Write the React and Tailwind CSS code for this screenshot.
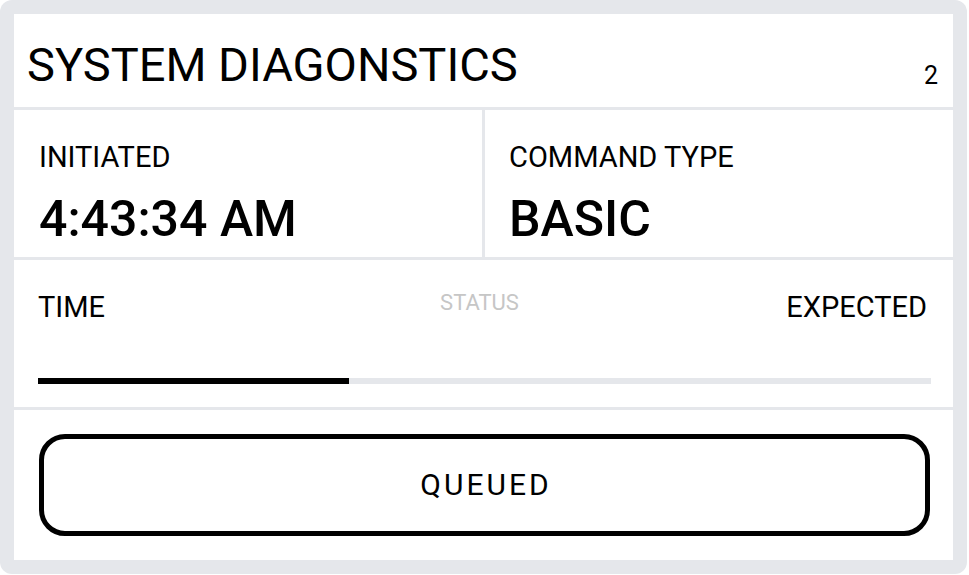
import React from "react";

const progress = 34.8;

function Label({ children, className = "" }) {
  return (
    <div className={`text-[29px] leading-none font-normal text-black ${className}`}>
      {children}
    </div>
  );
}

export default function App() {
  return (
    <div
      className="w-[967px] h-[574px] p-[14px] rounded-[12px] bg-[#e5e7eb] text-black"
      style={{ fontFamily: "Roboto, 'Liberation Sans', sans-serif" }}
    >
      <div className="flex flex-col gap-[3px]">
        {/* Header */}
        <div className="bg-white h-[93px] pl-[13px] pr-[15px] pt-[27px] flex items-start justify-between">
          <h1 className="text-[47px] leading-none font-normal">SYSTEM DIAGONSTICS</h1>
          <span className="text-[25px] leading-none mt-[22px]">2</span>
        </div>

        {/* Initiated / command type */}
        <div className="grid grid-cols-2 gap-[3px] h-[147px]">
          <div className="bg-white pl-[25px] pt-[33px]">
            <Label>INITIATED</Label>
            <div className="mt-[22px] text-[50px] leading-none font-medium">4:43:34 AM</div>
          </div>
          <div className="bg-white pl-[24px] pt-[33px]">
            <Label>COMMAND TYPE</Label>
            <div className="mt-[22px] text-[50px] leading-none font-medium">BASIC</div>
          </div>
        </div>

        {/* Timeline */}
        <div className="bg-white h-[147px] pl-[24px] pr-[22px] pt-[33px]">
          <div className="grid grid-cols-[1fr_auto_1fr] items-start pr-[4px]">
            <Label>TIME</Label>
            <span className="text-[22px] leading-none text-[#c6c6c6] mt-[-1px] mr-[6px]">STATUS</span>
            <Label className="justify-self-end">EXPECTED</Label>
          </div>
          <div className="mt-[56px] h-[6px] bg-[#e5e7eb]">
            <div className="h-full bg-black" style={{ width: `${progress}%` }} />
          </div>
        </div>

        {/* Status button */}
        <div className="bg-white h-[150px] pl-[25px] pr-[23px] py-6">
          <button className="w-full h-[102px] border-[5px] border-black rounded-[26px] bg-white flex items-center justify-center">
            <span className="text-[30px] leading-none font-normal tracking-[0.1em] mr-[-0.1em]">QUEUED</span>
          </button>
        </div>
      </div>
    </div>
  );
}
